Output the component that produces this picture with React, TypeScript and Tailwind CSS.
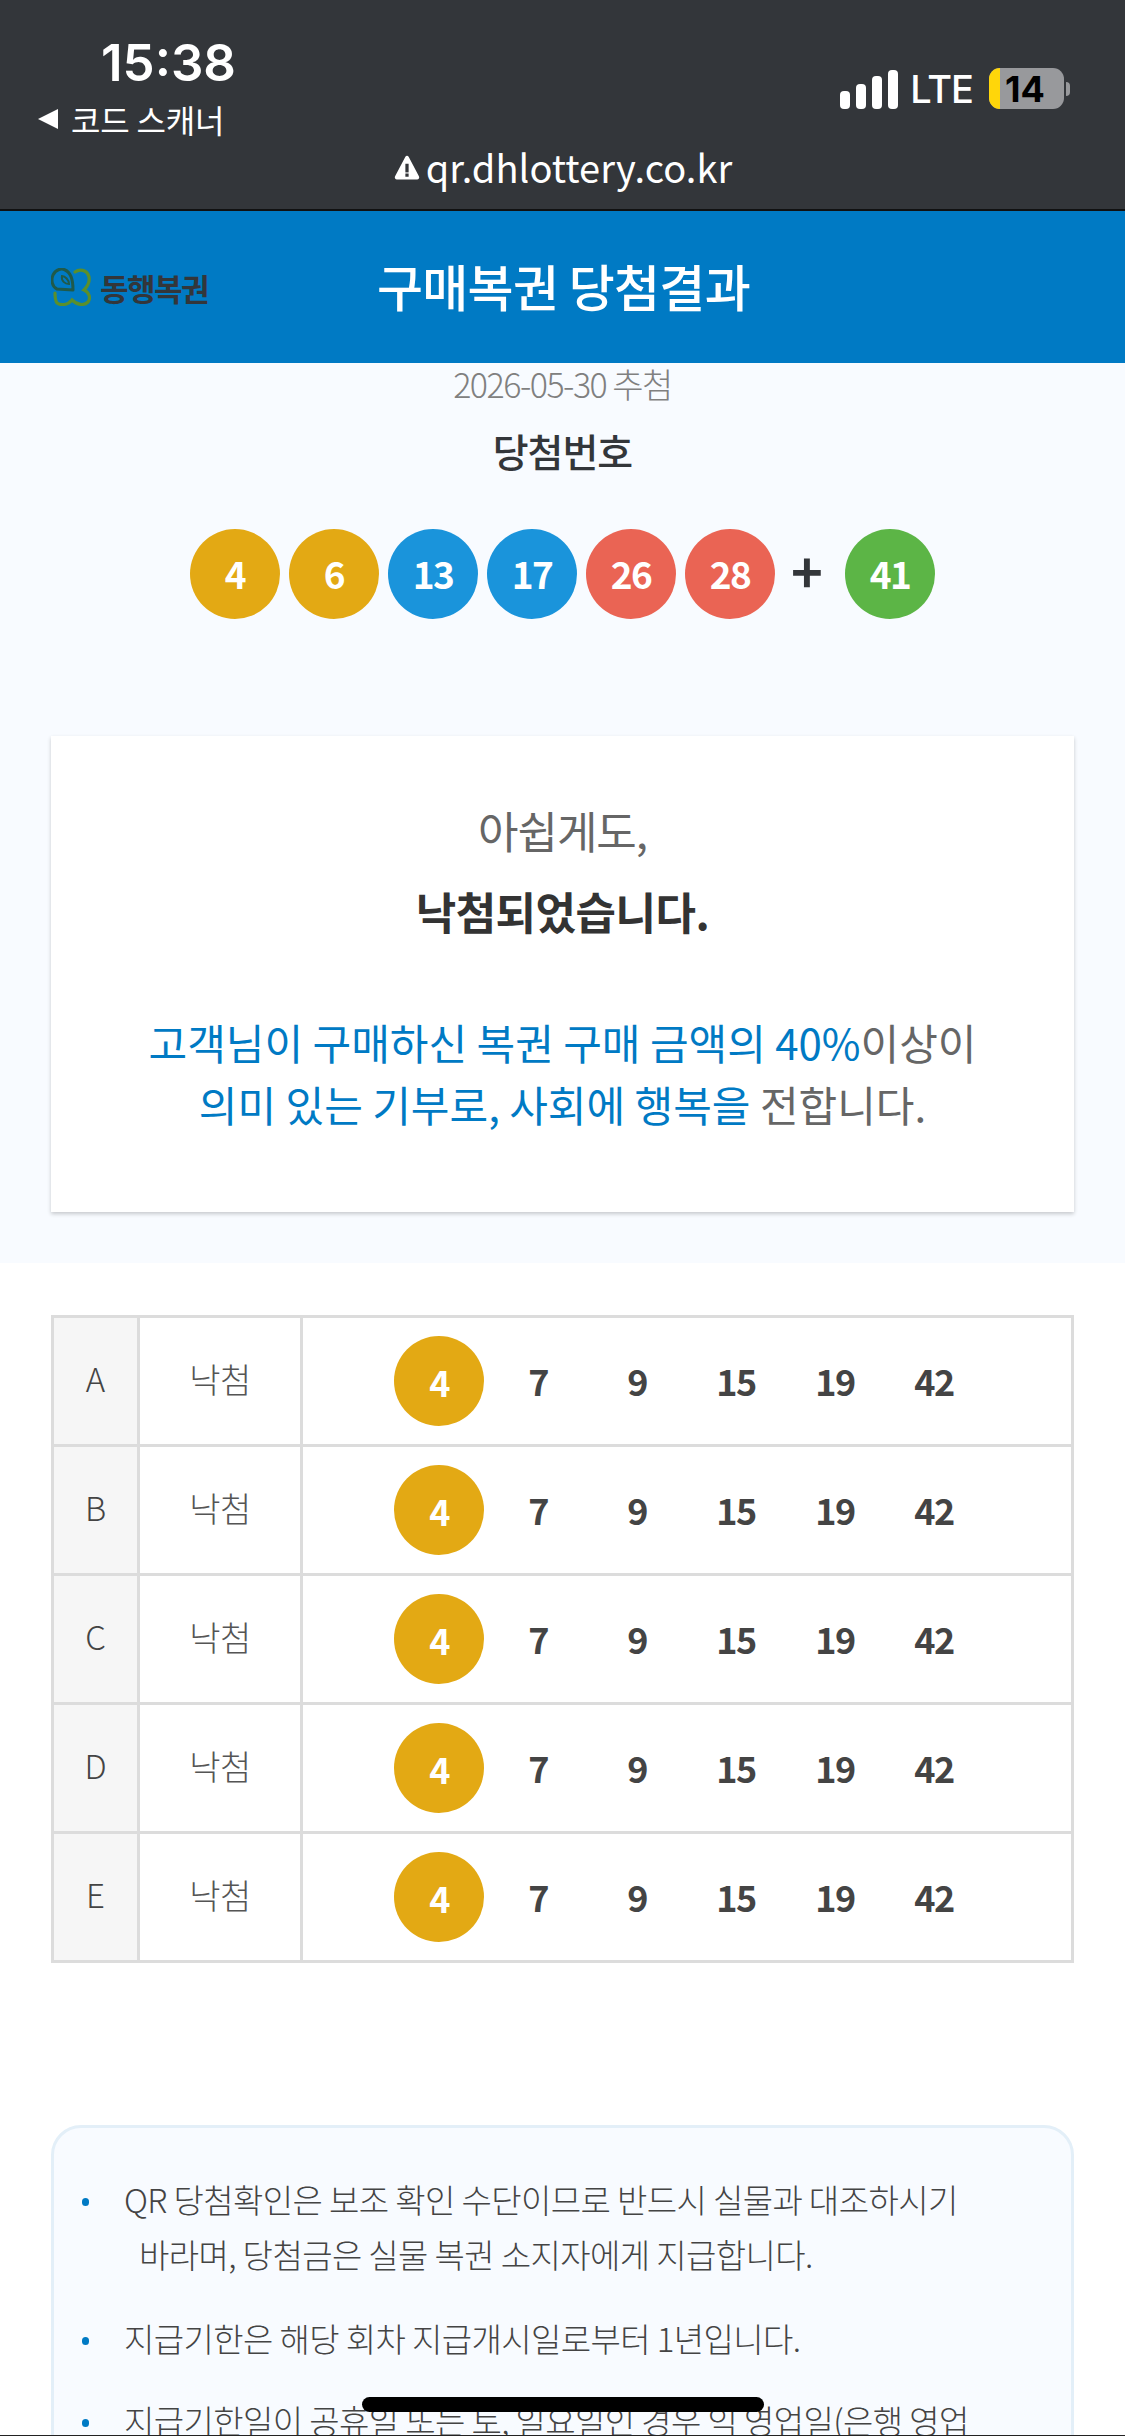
const font = '[font-family:"Noto_Sans_CJK_KR","Noto_Sans",sans-serif]';

function Ball({ n, color, size = "text-[37px]" }: { n: number; color: string; size?: string }) {
  return (
    <div className={`w-[90px] h-[90px] rounded-full flex items-center justify-center text-white font-bold tracking-[-1.5px] ${size} ${color}`}>
      {n}
    </div>
  );
}

function Logo() {
  return (
    <div className="flex items-center gap-[9px] w-[156px]">
      <svg width="40" height="38" viewBox="0 0 40 38" fill="none" className="shrink-0">
        <path d="M24 4C28 1 36 1 38 9C39 15 36 19 33 22C38 24 40 30 37 34C33 38 26 37 21 32C17 37 10 38 6 35C4 32 4 28 4 25" stroke="#5a8f2c" strokeWidth="3.2" strokeLinecap="round" />
        <path d="M22 22L6 21C1 19 0 12 2 7C5 1 11 0 14 2C19 4 22 10 22 22Z" stroke="#1f5a4a" strokeWidth="3" strokeLinejoin="round" />
        <path d="M11 8C14 8 18 12 18 16C14 16 10 13 11 8Z" stroke="#1f5a4a" strokeWidth="2" />
      </svg>
      <span className="text-[#33363a] text-[31px] font-bold tracking-[-1.5px] leading-none whitespace-nowrap">동행복권</span>
    </div>
  );
}

function Row({ label }: { label: string }) {
  return (
    <div className="flex h-[129px] border-b-[3px] border-[#dcdcdc]">
      <div className="w-[86px] bg-[#f6f6f6] border-r-[3px] border-[#dcdcdc] flex items-center justify-center text-[33px] font-light text-[#444] pb-[4px]">
        {label}
      </div>
      <div className="w-[163px] border-r-[3px] border-[#dcdcdc] flex items-center justify-center text-[34px] font-light text-[#555] tracking-[-0.5px] pb-[6px]">
        낙첨
      </div>
      <div className="flex-1 flex items-center pl-[91px] gap-[9px] pb-[1px]">
        <Ball n={4} color="bg-[#e3a914]" size="text-[36px]" />
        {[7, 9, 15, 19, 42].map((n) => (
          <div key={n} className="w-[90px] text-center text-[36px] font-bold text-[#444] tracking-[-1.5px] pb-[2px]">
            {n}
          </div>
        ))}
      </div>
    </div>
  );
}

function Bullet() {
  return (
    <span className="w-[42px] shrink-0 pt-[26px]">
      <span className="block w-[7px] h-[8px] rounded-full bg-[#007ac4]" />
    </span>
  );
}

export default function App() {
  return (
    <div className={`relative w-[1125px] h-[2436px] overflow-hidden bg-white ${font}`}>
      <header className="h-[211px] bg-[#33363a] border-b-2 border-[#111] text-white flex flex-col">
        <div className="flex justify-between items-start">
          <div className="pl-[37px] pt-[37px]">
            <div className="pl-[64px] text-[51px] font-semibold leading-[52px] [font-family:Inter,sans-serif]">15:38</div>
            <div className="flex items-center gap-[12px] mt-[12px] leading-[36px]">
              <svg width="22" height="22" viewBox="0 0 22 22"><path d="M21 1v20L1 11Z" fill="#fff" /></svg>
              <span className="text-[32px] tracking-[-0.2px]">코드 스캐너</span>
            </div>
          </div>
          <div className="flex items-center pr-[55px] pt-[68px]">
            <div className="flex items-end gap-[6px] h-[40px]">
              <div className="w-[10px] h-[18px] bg-white rounded-[4px]" />
              <div className="w-[10px] h-[25px] bg-white rounded-[4px]" />
              <div className="w-[10px] h-[33px] bg-white rounded-[4px]" />
              <div className="w-[10px] h-[39px] bg-white rounded-[4px]" />
            </div>
            <span className="ml-[12px] mr-[2px] text-[38px] font-medium leading-none tracking-[-1px] [font-family:Inter,sans-serif]">LTE</span>
            <div className="ml-[14px] w-[75px] h-[41px] rounded-[11px] bg-[#98999c] overflow-hidden flex items-center">
              <div className="w-[11px] h-full bg-[#ffd60a]" />
              <span className="ml-[5px] text-[36px] font-bold text-black leading-none [font-family:Inter,sans-serif]">14</span>
            </div>
            <div className="w-[4px] h-[14px] ml-[2px] rounded-r-full bg-[#98999c]" />
          </div>
        </div>
        <div className="flex-1 flex items-center justify-center gap-[6px] -mt-[12px] pl-[1px]">
          <svg width="26" height="26" viewBox="0 0 24 24"><path d="M10.5 2.5a1.8 1.8 0 0 1 3 0L23 20.5a2 2 0 0 1-1.8 3H2.800a2 2 0 0 1-1.800-3Z" fill="#fff" /><rect x="10.500" y="9" width="3" height="8" fill="#33363a" /><rect x="10.500" y="18" width="3" height="3" fill="#33363a" /></svg>
          <span className="text-[38px] tracking-[0.05px] leading-none">qr.dhlottery.co.kr</span>
        </div>
      </header>

      <div className="h-[152px] bg-[#007ac4] flex items-center pl-[51px]">
        <Logo />
        <h1 className="ml-[170px] -mt-[3px] text-white text-[50px] font-medium tracking-[-0.7px]">구매복권 당첨결과</h1>
      </div>

      <section className="h-[900px] bg-[#f8fbff] px-[51px] flex flex-col items-center">
        <p className="-mt-[1px] text-[34px] font-light text-[#808080] tracking-[-1.5px] leading-[44px]">2026-05-30 추첨</p>
        <p className="mt-[19px] text-[39px] font-medium text-[#33363a] tracking-[-1px] leading-[50px]">당첨번호</p>
        <div className="mt-[54px] flex items-center gap-[9px]">
          <Ball n={4} color="bg-[#e3a914]" />
          <Ball n={6} color="bg-[#e3a914]" />
          <Ball n={13} color="bg-[#1a94db]" />
          <Ball n={17} color="bg-[#1a94db]" />
          <Ball n={26} color="bg-[#ea6454]" />
          <Ball n={28} color="bg-[#ea6454]" />
          <span className="w-[52px] pr-[6px] text-center text-[#33363a] text-[54px] font-bold leading-none -mt-[8px]">+</span>
          <Ball n={41} color="bg-[#5cb546]" />
        </div>
        <div className="mt-[117px] w-full h-[476px] bg-white shadow-[0_2px_4px_rgba(0,0,0,0.2)] flex flex-col items-center text-center">
          <p className="mt-[64px] text-[44px] font-normal text-[#666] leading-[60px] tracking-[-1px]">아쉽게도,</p>
          <p className="mt-[21px] text-[44px] font-bold text-[#333] leading-[60px] tracking-[-0.5px]">낙첨되었습니다.</p>
          <p className="mt-[70px] text-[42px] font-normal text-[#666] leading-[62px]">
            <span className="text-[#007ac4]">고객님이 구매하신 복권 구매 금액의 40%</span>이상이
            <br />
            <span className="text-[#007ac4]">의미 있는 기부로, 사회에 행복을</span> 전합니다.
          </p>
        </div>
      </section>

      <div className="mt-[52px] mx-[51px] border-x-[3px] border-t-[3px] border-[#dcdcdc] flex flex-col">
        {["A", "B", "C", "D", "E"].map((l) => (
          <Row key={l} label={l} />
        ))}
      </div>

      <div className="mt-[162px] mx-[51px] h-[400px] rounded-t-[30px] bg-[#f8fbff] border-[3px] border-[#e3eff8] pt-[44px] pl-[28px] text-[33px] font-light text-[#444] tracking-[-0.6px] leading-[55px]">
        <div className="flex">
          <Bullet />
          <p className="whitespace-nowrap">QR 당첨확인은 보조 확인 수단이므로 반드시 실물과 대조하시기<br /><span className="pl-[15px]">바라며, 당첨금은 실물 복권 소지자에게 지급합니다.</span></p>
        </div>
        <div className="flex mt-[29px]">
          <Bullet />
          <p className="whitespace-nowrap">지급기한은 해당 회차 지급개시일로부터 1년입니다.</p>
        </div>
        <div className="flex mt-[27px]">
          <Bullet />
          <p className="whitespace-nowrap">지급기한일이 공휴일 또는 토, 일요일인 경우 익 영업일(은행 영업</p>
        </div>
      </div>

      <div className="absolute left-[362px] top-[2397px] w-[402px] h-[15px] rounded-[10px] bg-black" />
      <div className="absolute left-0 right-0 bottom-0 h-[1px] bg-[#222]" />
    </div>
  );
}
